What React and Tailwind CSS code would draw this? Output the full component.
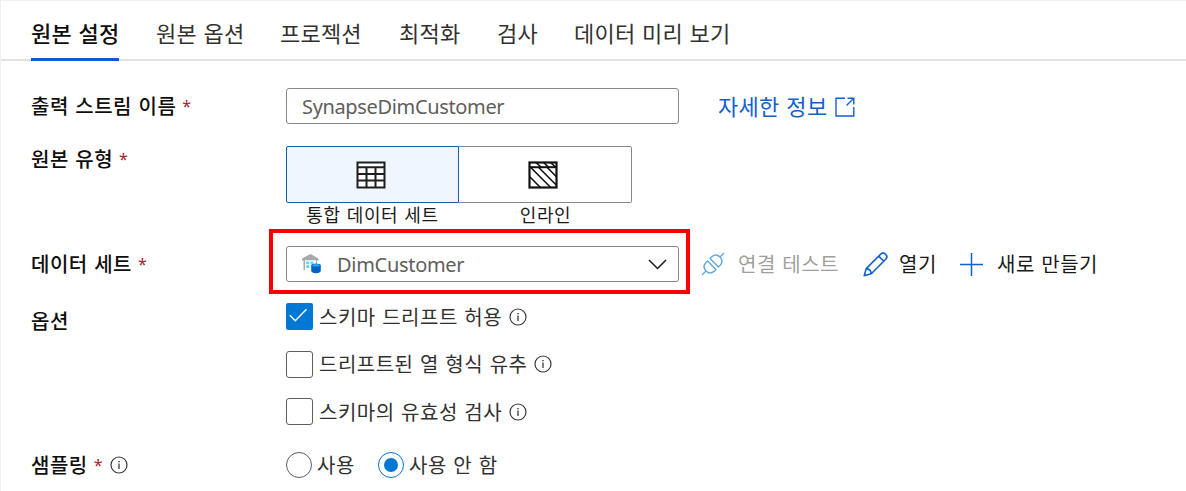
import React from "react";

const tabs = [
  { label: "원본 설정", width: "w-[88px]", active: true },
  { label: "원본 옵션", width: "w-[87px]" },
  { label: "프로젝션", width: "w-[82px]" },
  { label: "최적화", width: "w-[61px]" },
  { label: "검사", width: "w-[40px]" },
  { label: "데이터 미리 보기", width: "w-[156px]" },
];

const options = [
  { label: "스키마 드리프트 허용", checked: true },
  { label: "드리프트된 열 형식 유추" },
  { label: "스키마의 유효성 검사" },
];

function InfoIcon() {
  return (
    <svg className="size-[18px] shrink-0" viewBox="0 0 18 18" fill="none" stroke="#3b3a39">
      <circle cx="9" cy="9" r="8" strokeWidth="1.2" />
      <path d="M9 7.6V13" strokeWidth="1.3" />
      <path d="M9 4.9V6.3" strokeWidth="1.5" />
    </svg>
  );
}

function FieldLabel({ children, required, info }) {
  return (
    <div className="flex h-6 w-[255px] shrink-0 items-center text-[20px] font-medium tracking-[0.5px] whitespace-nowrap text-[#0f0e0d] [word-spacing:1.5px]">
      <span>{children}</span>
      {required && (
        <span className="ml-[6px] font-['Noto_Sans',sans-serif] text-[16px] font-normal tracking-normal text-[#a4262c]">*</span>
      )}
      {info && (
        <span className="ml-[7px]">
          <InfoIcon />
        </span>
      )}
    </div>
  );
}

function Checkbox({ checked }) {
  if (checked) {
    return (
      <span className="flex size-[27px] shrink-0 items-center justify-center rounded-[2px] bg-[#0078d4]">
        <svg className="size-[27px]" viewBox="0 0 27 27" fill="none" stroke="#fff" strokeWidth="1.5">
          <path d="M3.8 12.3 9.3 17.8 20.5 6.3" />
        </svg>
      </span>
    );
  }
  return <span className="size-[27px] shrink-0 rounded-[3px] border-[1.5px] border-[#605e5c] bg-white" />;
}

function TableIcon() {
  return (
    <svg className="mr-[4px] h-[28px] w-[30px]" viewBox="0 0 30 28" fill="none" stroke="#1f1f1f" strokeWidth="2">
      <rect x="1.5" y="1.5" width="27" height="25" fill="#fff" />
      <path d="M1.5 6.2H28.5M1.5 13H28.5M1.5 19.6H28.5M10.5 6.2V26.5M19.5 6.2V26.5" />
    </svg>
  );
}

function InlineIcon() {
  return (
    <svg className="mr-[5px] h-[28px] w-[30px]" viewBox="0 0 30 28" fill="none" stroke="#111" strokeWidth="1.6">
      <rect x="1.5" y="1.5" width="27" height="25" fill="#fff" strokeWidth="2.2" />
      <path d="M1.5 6.2H28.5" strokeWidth="2" />
      <path d="M8 1.5 13 6.2M15.5 1.5 20.5 6.2M22.5 1.5 28.5 6.8M1.5 15.5 12.5 26.5M2.5 6.2 22.5 26.2M10.5 6.2 28.5 24.2M19 6.2 28.5 15.7" />
    </svg>
  );
}

function WarehouseIcon() {
  return (
    <svg className="h-[22px] w-[22px]" viewBox="0 0 22 22">
      <path d="M1 5.6 9.5 1 17.5 5.6V7.5H16V17H14V7.5H4V17H2.5V7.5H1Z" fill="#a9a9a9" />
      <path d="M4 7.5H15V17H4Z" fill="#fff" />
      <path d="M5.2 8.5h3v2.7h-3zM9.4 8.5h3v2.7h-3zM5.2 12.3h3v2.7h-3z" fill="#50dcff" />
      <path d="M10.2 12.4v5.7c0 1.2 2 2.1 4.8 2.1s4.8-.9 4.8-2.1v-5.7z" fill="#0062c4" />
      <ellipse cx="15" cy="12.4" rx="4.8" ry="1.9" fill="#0a78d8" />
      <ellipse cx="15" cy="12.3" rx="3.3" ry="1" fill="#2fa8ec" />
    </svg>
  );
}

function PlugIcon() {
  return (
    <svg className="h-[24px] w-[24px]" viewBox="0 0 24 24" fill="none" stroke="#5fa9e2" strokeWidth="1.4" strokeLinejoin="round">
      <path d="M1 23 5 19M19 5 23 1" />
      <path d="M6.6 9 15 17.4 13 19.4C10.6 21.4 7.3 21.2 5 19 2.8 16.7 2.6 13.4 4.6 11ZM9 6.6 17.4 15 19.4 13C21.4 10.6 21.2 7.3 19 5 16.7 2.8 13.4 2.6 11 4.6Z" />
    </svg>
  );
}

function PencilIcon() {
  return (
    <svg className="h-[25px] w-[25px]" viewBox="0 0 25 25" fill="none" stroke="#1160d0" strokeWidth="1.6" strokeLinejoin="round">
      <path d="M1.2 23.8 3.2 16.6 17.6 2.2C19 .8 21.2.8 22.6 2.2 24.1 3.7 24.1 5.9 22.7 7.3L8.3 21.7ZM3.2 16.6C5.8 16.8 8 18.8 8.3 21.7M15.7 4.1 20.8 9.2" />
    </svg>
  );
}

function Radio({ checked }) {
  return checked ? (
    <span className="flex size-[26px] shrink-0 items-center justify-center rounded-full border-[1.5px] border-[#0078d4]">
      <span className="size-[14px] rounded-full bg-[#0078d4]" />
    </span>
  ) : (
    <span className="size-[26px] shrink-0 rounded-full border-[1.5px] border-[#605e5c]" />
  );
}

export default function App() {
  return (
    <div className="h-[491px] w-[1186px] overflow-hidden border-t border-l border-[#f0f0f0] bg-white font-['Noto_Sans_CJK_KR',sans-serif] text-[20px] leading-6 tracking-[0.5px] text-[#323130] [word-spacing:1.5px]">
      <nav className="flex h-[60px] gap-[37px] border-b-2 border-[#e1e1e1] pl-[30px] text-[22px] tracking-[0.2px]">
        {tabs.map((t) => (
          <div
            key={t.label}
            className={`${t.width} h-[60px] shrink-0 pt-[19px] whitespace-nowrap ${t.active ? "border-b-3 border-[#0f5bd0] font-medium text-[#0f0e0d]" : ""}`}
          >
            {t.label}
          </div>
        ))}
      </nav>

      <main className="flex flex-col pl-[30px]">
        <div className="mt-[27px] flex h-[36px] items-center">
          <FieldLabel required>출력 스트림 이름</FieldLabel>
          <div className="flex h-[36px] w-[393px] items-center rounded-[3px] border-[1.5px] border-[#8a8886] pt-[2px] pl-[15px] font-['Noto_Sans',sans-serif] text-[20px] tracking-[-0.35px] text-[#605e5c]">
            SynapseDimCustomer
          </div>
          <a className="ml-[39px] flex items-center gap-[8px] text-[#1160d0]">
            <span className="pb-[3px] text-[22px] tracking-[0.3px]">자세한 정보</span>
            <svg className="mt-px size-[20px]" viewBox="0 0 20 20" fill="none" stroke="#1160d0" strokeWidth="1.4">
              <path d="M10 1.2H1V19H18.8V10M12.5 1.2H18.8V7.5M18.5 1.5 11.5 8.5" />
            </svg>
          </a>
        </div>

        <div className="mt-[22px] flex h-[83px] items-start">
          <div className="pt-px">
            <FieldLabel required>원본 유형</FieldLabel>
          </div>
          <div className="flex">
            <div className="flex w-[173px] flex-col items-center">
              <div className="flex h-[57px] w-full items-center justify-center rounded-l-[2px] border-[1.5px] border-[#1160b0] bg-[#eff6ff]">
                <TableIcon />
              </div>
              <span className="-mt-px text-[18px] tracking-[0.6px] text-[#1b1a19]">통합 데이터 세트</span>
            </div>
            <div className="flex w-[173px] flex-col items-center">
              <div className="flex h-[57px] w-full items-center justify-center rounded-r-[2px] border-[1.5px] border-l-0 border-[#8a8886]">
                <InlineIcon />
              </div>
              <span className="-mt-px text-[18px] tracking-[0.6px] text-[#1b1a19]">인라인</span>
            </div>
          </div>
        </div>

        <div className="flex h-[65px] items-center">
          <div className="w-[238px] shrink-0 pt-[4px]">
            <FieldLabel required>데이터 세트</FieldLabel>
          </div>
          <div className="h-[65px] w-[421px] shrink-0 border-[4px] border-[#fb0000] bg-white pt-[13px] pl-[13px]">
            <div className="flex h-[36px] w-[393px] items-center rounded-[3px] border-[1.5px] border-[#8a8886] pr-[11px] pl-[14px]">
              <WarehouseIcon />
              <span className="ml-[14px] grow pt-[2px] font-['Noto_Sans',sans-serif] text-[20px] tracking-[-0.3px] text-[#605e5c]">DimCustomer</span>
              <svg className="h-[11px] w-[19px]" viewBox="0 0 19 11" fill="none" stroke="#1b1a19" strokeWidth="1.5">
                <path d="M1 1 9.5 9.5 18 1" />
              </svg>
            </div>
          </div>
          <div className="ml-[11px] flex items-center pt-[5px] whitespace-nowrap text-[#1b1a19]">
            <PlugIcon />
            <span className="ml-[13px] w-[101px] text-[#a19f9d]">연결 테스트</span>
            <span className="ml-[24px]">
              <PencilIcon />
            </span>
            <span className="ml-[11px] w-[38px]">열기</span>
            <svg className="ml-[23px] size-[23px]" viewBox="0 0 23 23" fill="none" stroke="#1160d0" strokeWidth="1.5">
              <path d="M11.5 0V23M0 11.5H23" />
            </svg>
            <span className="ml-[14px]">새로 만들기</span>
          </div>
        </div>

        <div className="mt-[9px] flex items-start">
          <div className="pt-[6px]">
            <FieldLabel>옵션</FieldLabel>
          </div>
          <div className="flex flex-col gap-[20.5px]">
            {options.map((o) => (
              <div key={o.label} className="flex h-[27px] items-center">
                <Checkbox checked={o.checked} />
                <span className="mr-[7px] ml-[6px] whitespace-nowrap">{o.label}</span>
                <InfoIcon />
              </div>
            ))}
          </div>
        </div>

        <div className="mt-[27px] flex h-[26px] items-center">
          <FieldLabel required info>
            샘플링
          </FieldLabel>
          <Radio />
          <span className="ml-[5px] w-[61px]">사용</span>
          <Radio checked />
          <span className="ml-[5px]">사용 안 함</span>
        </div>
      </main>
    </div>
  );
}
